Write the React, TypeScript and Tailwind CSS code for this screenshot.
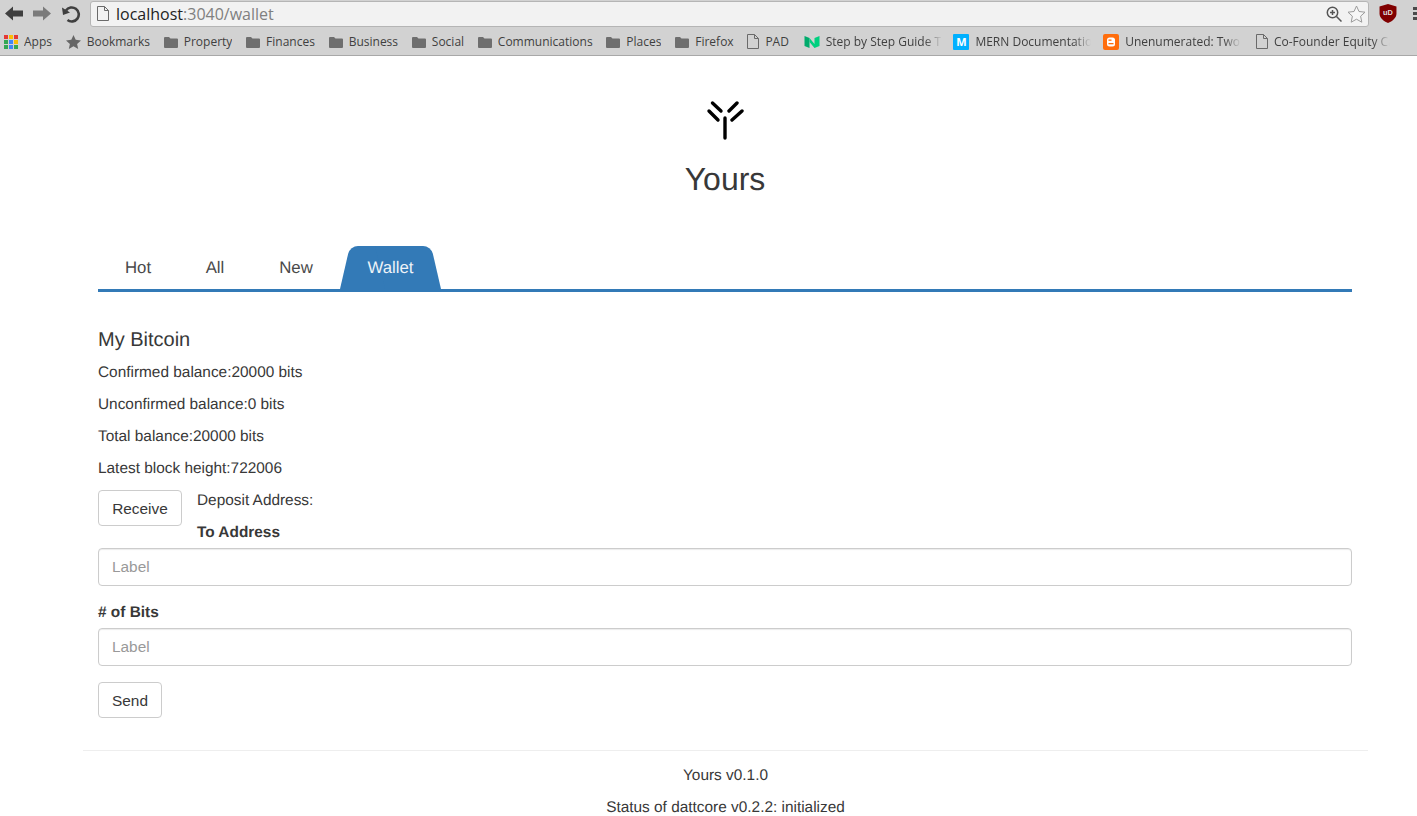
import * as React from 'react';

function Folder() {
  return (
    <svg width="14" height="12" viewBox="0 0 14 12" className="shrink-0">
      <path d="M0 2a1 1 0 0 1 1-1h4l1.500 1.500H13a1 1 0 0 1 1 1V11a1 1 0 0 1-1 1H1a1 1 0 0 1-1-1z" fill="#6e6e6e" />
    </svg>
  );
}

function PageIcon({ size = 15 }: { size?: number }) {
  return (
    <svg width={size - 3} height={size} viewBox="0 0 12 15" className="shrink-0" fill="none" stroke="#6a6a6a" strokeWidth="1">
      <path d="M.5.5h7l4 4v10h-11z" />
      <path d="M7.500 .5v4h4" />
    </svg>
  );
}

function AppsIcon() {
  const colors = ['#e53935', '#fbbc05', '#e53935', '#34a853', '#4285f4', '#fbbc05', '#34a853', '#4285f4', '#34a853'];
  return (
    <div className="grid grid-cols-3 gap-[1px] w-[14px] h-[14px] shrink-0">
      {colors.map((c, i) => (
        <span key={i} className="block w-[4px] h-[4px]" style={{ backgroundColor: c }} />
      ))}
    </div>
  );
}

function Bookmark({ icon, label, fade, className = '' }: { icon: React.ReactNode; label: string; fade?: boolean; className?: string }) {
  return (
    <div className={`flex items-center gap-[6px] shrink-0 ${fade ? '-mr-[2px]' : ''} ${className}`}>
      {icon}
      <span
        className={`block overflow-hidden whitespace-nowrap ${fade ? 'w-[116px] [mask-image:linear-gradient(to_right,black_85%,transparent)]' : ''}`}
      >
        {label}
      </span>
    </div>
  );
}

function BrowserChrome() {
  return (
    <div className="h-[56px] bg-[#d2d2d2] border-b border-[#a8a8a8] font-['Open_Sans',sans-serif] text-[#3f3f3f] [text-rendering:auto]">
      <div className="h-[27px] flex items-center">
        <div className="flex items-center w-[90px] shrink-0 pl-[5px] gap-[10px]">
          <svg width="18" height="15" viewBox="0 0 18 15"><path d="M0 7.500l8-7v4h10v6H8v4z" fill="#3f3f3f" /></svg>
          <svg width="18" height="15" viewBox="0 0 18 15"><path d="M18 7.500l-8-7v4H0v6h10v4z" fill="#7b7b7b" /></svg>
          <svg width="20" height="18" viewBox="0 0 20 18" fill="none">
            <path d="M6.500 15A7 7 0 1 0 5 5.500" stroke="#3f3f3f" strokeWidth="2.600" />
            <path d="M1 2.500l1 7.500 7-2.500z" fill="#3f3f3f" />
          </svg>
        </div>
        <div className="w-[1279px] h-[26px] shrink-0 bg-[#f2f2f2] border border-[#b5b5b5] rounded-[3px] flex items-center pl-[6px] pr-[2px]">
          <PageIcon />
          <span className="ml-[7px] text-[16px] leading-none text-[#222]">
            localhost<span className="text-[#808080]">:3040/wallet</span>
          </span>
          <div className="ml-auto flex items-center gap-[5px]">
            <svg width="16" height="16" viewBox="0 0 16 16" fill="none" stroke="#555" strokeWidth="1.500">
              <circle cx="6.500" cy="6.500" r="5.200" />
              <path d="M10.500 10.500l5 5M4 6.500h5M6.500 4v5" />
            </svg>
            <svg width="19" height="18" viewBox="0 0 19 18" fill="#f7f7f7" stroke="#9a9a9a" strokeWidth="1">
              <path d="M9.500 1l2.500 5.500 6 .7-4.400 4 1.200 6-5.300-3-5.300 3 1.200-6L1 7.200l6-.7z" />
            </svg>
          </div>
        </div>
        <div className="flex-1 flex items-center pl-[10px]">
          <svg width="18" height="19" viewBox="0 0 17 20" preserveAspectRatio="none">
            <path d="M8.500 0l8 2.500V10c0 5-4 8-8 10-4-2-8-5-8-10V2.500z" fill="#800000" />
            <text x="8.500" y="11.500" fontSize="7" fontWeight="700" textAnchor="middle" fill="#ddd" fontFamily="Liberation Sans">uD</text>
          </svg>
          <div className="ml-[16px] flex flex-col gap-[2px]">
            <span className="block w-[5px] h-[3px] bg-[#4a4a4a]" />
            <span className="block w-[5px] h-[3px] bg-[#4a4a4a]" />
            <span className="block w-[5px] h-[3px] bg-[#4a4a4a]" />
          </div>
        </div>
      </div>
      <div className="h-[28px] flex items-center pl-[4px] pt-[1px] text-[12px] gap-[13.750px] overflow-hidden">
        <Bookmark icon={<AppsIcon />} label="Apps" />
        <Bookmark
          icon={
            <svg width="15" height="14" viewBox="0 0 15 14" className="shrink-0"><path d="M7.500 0l2.200 4.800 5.300.6-3.900 3.600 1.100 5-4.700-2.700L2.800 14l1.100-5L0 5.400l5.300-.6z" fill="#666" /></svg>
          }
          label="Bookmarks"
        />
        <Bookmark icon={<Folder />} label="Property" />
        <Bookmark icon={<Folder />} label="Finances" />
        <Bookmark icon={<Folder />} label="Business" />
        <Bookmark icon={<Folder />} label="Social" />
        <Bookmark icon={<Folder />} label="Communications" />
        <Bookmark icon={<Folder />} label="Places" />
        <Bookmark icon={<Folder />} label="Firefox" />
        <Bookmark icon={<PageIcon />} label="PAD" className="mr-[1px]" />
        <Bookmark
          icon={
            <svg width="16" height="12" viewBox="0 0 15 12" className="shrink-0">
              <path d="M0 0l5 2v10l-5-2z" fill="#00ab6c" />
              <path d="M5 2l5 6V2l5-2v10l-5 2-5-6z" fill="#00d07f" />
            </svg>
          }
          label="Step by Step Guide To"
          fade
        />
        <Bookmark
          icon={
            <div className="w-[16px] h-[16px] rounded-[1px] bg-[#00b0ff] text-white text-[11px] font-bold flex items-center justify-center shrink-0">M</div>
          }
          label="MERN Documentation"
          fade
        />
        <Bookmark
          icon={
            <svg width="16" height="16" viewBox="0 0 16 16" className="shrink-0">
              <rect width="16" height="16" rx="2" fill="#ff6d0c" />
              <rect x="4" y="3.500" width="8" height="9" rx="2.500" fill="#fff" />
              <rect x="5.500" y="5.500" width="3" height="1.300" fill="#ff6d0c" />
              <rect x="5.500" y="9" width="5" height="1.300" fill="#ff6d0c" />
            </svg>
          }
          label="Unenumerated: Two"
          fade
        />
        <Bookmark icon={<PageIcon />} label="Co-Founder Equity Calc" fade className="ml-[3px]" />
      </div>
    </div>
  );
}

function Logo() {
  return (
    <svg width="38" height="40" viewBox="0 0 38 40" fill="none" stroke="#000" strokeWidth="3.400" strokeLinecap="round">
      <path d="M19 18v20" />
      <path d="M6.500 3l8.500 8M3 11l9 9" />
      <path d="M31 3l-8 8M36 11l-10 9" />
    </svg>
  );
}

function Tabs() {
  return (
    <div className="flex items-end h-[46px] border-b-[3px] border-[#337ab7] text-[16.800px] text-[#4a4a4a]">
      <div className="h-[43px] w-[80px] flex items-center justify-center">Hot</div>
      <div className="h-[43px] w-[74px] flex items-center justify-center">All</div>
      <div className="h-[43px] w-[88px] flex items-center justify-center">New</div>
      <div className="relative h-[43px] w-[101px] flex items-center justify-center text-[#eef3f8]">
        <span className="absolute left-0 inset-y-0 w-[56px] bg-[#337ab7] rounded-tl-[8px] origin-bottom-left [transform:skewX(-13deg)]" />
        <span className="absolute right-0 inset-y-0 w-[56px] bg-[#337ab7] rounded-tr-[8px] origin-bottom-right [transform:skewX(13deg)]" />
        <span className="relative">Wallet</span>
      </div>
    </div>
  );
}

function Field() {
  return (
    <input
      placeholder="Label"
      readOnly
      className="block w-full mt-[4px] h-[38px] px-[13px] bg-white border border-[#ccc] rounded-[4px] shadow-[inset_0_1px_1px_rgba(0,0,0,0.08)] text-[15.400px] placeholder:text-[#999] outline-none"
    />
  );
}

export default function App() {
  return (
    <div className="h-[816px] overflow-hidden bg-white font-['Liberation_Sans',sans-serif] text-[15.400px] leading-[22px] text-[#383838] [text-rendering:geometricPrecision]">
      <BrowserChrome />
      <div className="flex flex-col items-center pt-[44px] pl-[33px]">
        <Logo />
        <h1 className="mt-[21px] text-[32px] leading-[36px] font-normal">Yours</h1>
      </div>
      <main className="pl-[98px] pr-[65px] mt-[49px]">
        <Tabs />
        <h2 className="mt-[36px] text-[20px] leading-[24px] font-normal">My Bitcoin</h2>
        <p className="mt-[10px]">Confirmed balance:20000 bits</p>
        <p className="mt-[10px]">Unconfirmed balance:0 bits</p>
        <p className="mt-[10px]">Total balance:20000 bits</p>
        <p className="mt-[10px]">Latest block height:722006</p>
        <div className="flex mt-[10px]">
          <button className="h-[36px] w-[84px] pt-[1px] bg-white border border-[#ccc] rounded-[4px]">Receive</button>
          <div className="ml-[15px]">
            <p>Deposit Address:</p>
            <p className="mt-[10px] font-bold">To Address</p>
          </div>
        </div>
        <Field />
        <p className="mt-[16px] font-bold"># of Bits</p>
        <Field />
        <button className="block mt-[16px] h-[36px] w-[64px] pt-[1px] bg-white border border-[#ccc] rounded-[4px]">Send</button>
      </main>
      <footer className="ml-[83px] mr-[49px] mt-[32px] border-t border-[#eee] pt-[14px] text-center">
        <p>Yours v0.1.0</p>
        <p className="mt-[10px]">Status of dattcore v0.2.2: initialized</p>
      </footer>
    </div>
  );
}
